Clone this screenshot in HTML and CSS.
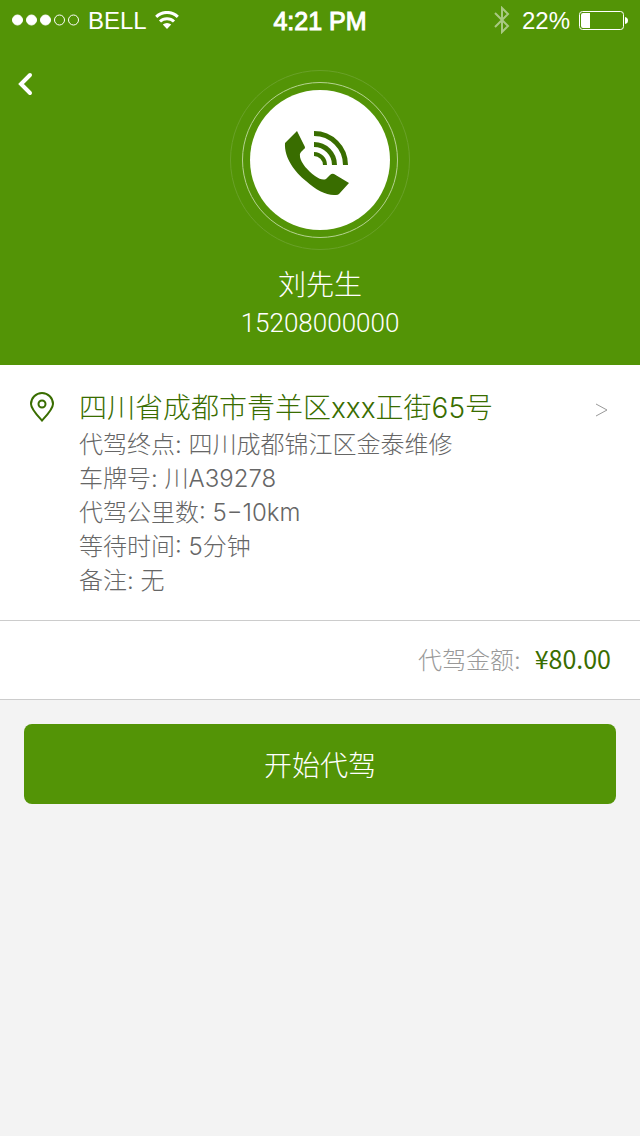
FILE: index.html
```html
<!DOCTYPE html>
<html lang="zh-CN">
<head>
<meta charset="utf-8">
<meta name="viewport" content="width=device-width, initial-scale=1">
<title>代驾订单</title>
<link rel="stylesheet" href="styles.css">
</head>
<body>
<header class="hero">
  <div class="status">
    <div class="status-left">
      <svg class="signal" width="68" height="12" viewBox="0 0 68 12" fill="#fff" stroke="#fff" aria-hidden="true">
        <circle cx="5.500" cy="6" r="5"/><circle cx="19.500" cy="6" r="5"/><circle cx="33.500" cy="6" r="5"/>
        <circle cx="47.500" cy="6" r="5" fill="none"/><circle cx="61.500" cy="6" r="5" fill="none"/>
      </svg>
      <span class="status-text">BELL</span>
      <svg width="24" height="18" viewBox="0 0 24 18" aria-hidden="true">
        <path d="M1.200 5.800a15.500 15.500 0 0 1 21.600 0M5 10.500a10 10 0 0 1 14 0" fill="none" stroke="#fff" stroke-width="3"/>
        <path d="M12 18l-4.200-4.400a6 6 0 0 1 8.400 0z" fill="#fff"/>
      </svg>
    </div>
    <time class="clock">4:21 PM</time>
    <div class="status-right">
      <svg width="19" height="28" viewBox="0 0 19 28" fill="none" stroke="#fff" stroke-width="2" opacity=".5" aria-hidden="true">
        <path d="M1 7l13 13-6 6V2l6 6L1 21"/>
      </svg>
      <span class="status-text">22%</span>
      <svg width="49" height="19" viewBox="0 0 49 19" aria-hidden="true">
        <rect x=".5" y=".5" width="44" height="18" rx="3" fill="none" stroke="#fff"/>
        <path d="M2 4q0-2 2-2h7v15H4q-2 0-2-2zM46 6q3 .5 3 3.500t-3 3.500z" fill="#fff"/>
      </svg>
    </div>
  </div>
  <div class="profile">
    <button class="back" type="button" aria-label="返回">
      <svg width="16" height="24" viewBox="0 0 16 24" fill="none" stroke="#fff" stroke-width="4" stroke-linecap="round" stroke-linejoin="miter">
        <path d="M12 3L3 12l9 9"/>
      </svg>
    </button>
    <div class="ring-outer">
      <div class="ring-inner">
        <button class="call" type="button" aria-label="拨打电话">
          <svg width="72" height="60" viewBox="0 0 72 60" overflow="visible">
            <g transform="translate(0 1)">
              <path fill="#396d00" d="M13 0L1 12C0 27 11 41 22 50C32 59 43 65 52 64Q54 64 55 63L65 52L50 43Q48 42 46 44L42 48Q38 50 31 45C24 40 17 32 16 26Q15 23 17 21L20 18Q22 17 20 14Z"/>
              <path fill="none" stroke="#396d00" stroke-width="5" d="M30 2.500A31.500 31.500 0 0 1 61.500 34"/>
              <path fill="none" stroke="#396d00" stroke-width="5" d="M30 13.500A20.500 20.500 0 0 1 50.500 34"/>
              <path fill="none" stroke="#396d00" stroke-width="4" d="M30 23A11 11 0 0 1 41 34"/>
            </g>
          </svg>
        </button>
      </div>
    </div>
  </div>
  <h1 class="name">刘先生</h1>
  <p class="phone">15208000000</p>
</header>
<main>
  <section class="order">
    <svg class="pin" width="26" height="32" viewBox="0 0 26 32" fill="none" stroke="#396d00" stroke-width="2">
      <path d="M13 28.500C8 23 2 17 2 12a11 11 0 0 1 22 0C24 17 18 23 13 28.500z"/>
      <circle cx="13" cy="12" r="3.500"/>
    </svg>
    <div class="details">
      <h2 class="address">四川省成都市青羊区xxx正街65号</h2>
      <p>代驾终点: 四川成都锦江区金泰维修</p>
      <p>车牌号: 川A39278</p>
      <p>代驾公里数: 5−10km</p>
      <p>等待时间: 5分钟</p>
      <p>备注: 无</p>
    </div>
    <a class="more" href="#" aria-label="查看地址">
      <svg width="13" height="14" viewBox="0 0 13 14" fill="none" stroke="#999">
        <path d="M1 1l11 6-11 6"/>
      </svg>
    </a>
  </section>
  <section class="amount">
    <span class="amount-label">代驾金额:</span>
    <span class="price">¥80.00</span>
  </section>
  <div class="actions">
    <button class="start" type="button">开始代驾</button>
  </div>
</main>
</body>
</html>
```
FILE: styles.css
```css
* {
  box-sizing: border-box;
}

body {
  margin: 0;
  min-height: 100vh;
  background: #f3f3f3;
  color: #666;
  font-family: Inter, "Noto Sans CJK SC", sans-serif;
  font-weight: 300;
}

h1, h2, p {
  margin: 0;
  font-weight: 300;
}

button {
  border: 0;
  padding: 0;
  color: inherit;
  font: inherit;
  cursor: pointer;
}

svg {
  display: block;
  flex: none;
}

.hero {
  background: #539406;
  color: #fff;
  text-align: center;
  padding-bottom: 22px;
}

.status {
  display: grid;
  grid-template-columns: 1fr auto 1fr;
  align-items: center;
  height: 40px;
  padding: 0 12px;
  font: 400 24px/38px "Liberation Sans", sans-serif;
}

.status-left,
.status-right {
  display: flex;
  align-items: center;
  gap: 8px;
}

.status-right {
  justify-content: flex-end;
  gap: 9px;
}

.status-text,
.clock {
  padding-top: 2px;
}

.clock {
  font-size: 25px;
  -webkit-text-stroke: 1px #fff;
}

.profile {
  display: grid;
  grid-template-columns: 1fr auto 1fr;
  align-items: start;
  padding-top: 30px;
}

.back {
  justify-self: start;
  padding: 2px 18px;
  background: none;
}

.ring-outer {
  padding: 11px;
  border: 1px solid #69a128;
  border-radius: 50%;
}

.ring-inner {
  padding: 7px;
  border: 1px solid #b5d390;
  border-radius: 50%;
}

.call {
  display: grid;
  place-items: center;
  width: 140px;
  height: 140px;
  border-radius: 50%;
  background: #fff;
}

.name {
  margin-top: 16px;
  font-size: 28px;
  line-height: 38px;
}

.phone {
  font-family: Roboto, sans-serif;
  font-size: 26px;
  line-height: 39px;
}

.order {
  display: flex;
  align-items: flex-start;
  padding: 24px 32px 22px 29px;
  background: #fff;
  border-bottom: 1px solid #ccc;
}

.pin {
  margin-top: 3px;
}

.details {
  flex: 1;
  padding-left: 24px;
  font-size: 24px;
  line-height: 34px;
}

.address {
  color: #396d00;
  font-size: 28px;
  line-height: 39px;
}

.more {
  align-self: flex-start;
  padding-top: 14px;
}

.amount {
  display: flex;
  justify-content: flex-end;
  align-items: center;
  gap: 14px;
  height: 79px;
  padding: 0 29px 4px;
  background: #fff;
  border-bottom: 1px solid #ccc;
}

.amount-label {
  color: #999;
  font-size: 24px;
}

.price {
  color: #396d00;
  font-family: "Noto Sans CJK SC", sans-serif;
  font-size: 25px;
  font-weight: 400;
}

.actions {
  padding: 24px;
}

.start {
  display: block;
  width: 100%;
  height: 80px;
  border-radius: 8px;
  background: #539406;
  color: #fff;
  font-size: 28px;
}
```
